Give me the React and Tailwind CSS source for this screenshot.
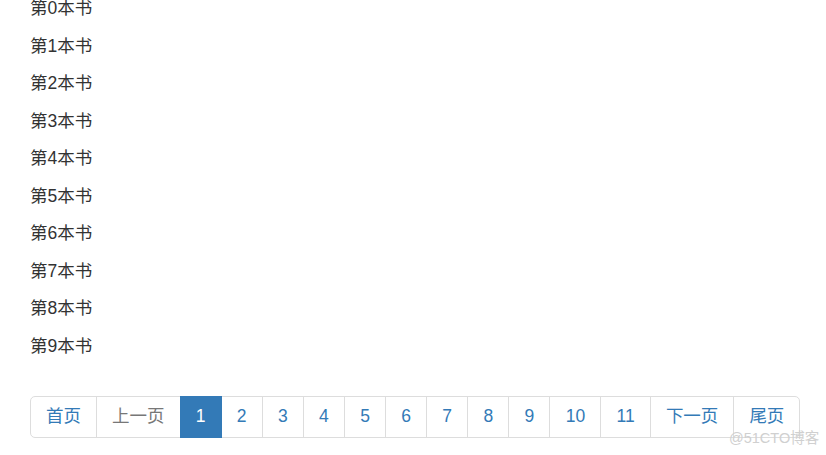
import React from "react";

const font = { fontFamily: '"Liberation Sans", Arial, "Noto Sans CJK SC", sans-serif' };

export default function App() {
  const books = Array.from({ length: 10 }, (_, i) => `第${i}本书`);
  const pages = ["1", "2", "3", "4", "5", "6", "7", "8", "9", "10", "11"];
  return (
    <div className="relative w-[826px] h-[455px] overflow-hidden bg-white text-[#333]" style={font}>
      <div className="pl-[30px] -mt-[4px]">
        {books.map((b) => (
          <div key={b} className="text-[17.5px] leading-[25px] mb-[12.5px]">
            {b}
          </div>
        ))}
        <ul className="flex mt-[37px] text-[17.5px] leading-[25px]">
          <li>
            <a className="block px-[15px] py-[7.5px] border border-[#ddd] rounded-l-[5px] text-[#337ab7]">首页</a>
          </li>
          <li>
            <a className="block -ml-px px-[15px] py-[7.5px] border border-[#ddd] text-[#777]">上一页</a>
          </li>
          {pages.map((p) =>
            p === "1" ? (
              <li key={p} className="relative z-10">
                <a className="block -ml-px px-[15.2px] py-[7.5px] border border-[#337ab7] bg-[#337ab7] text-white">{p}</a>
              </li>
            ) : (
              <li key={p}>
                <a className="block -ml-px px-[15.2px] py-[7.5px] border border-[#ddd] text-[#337ab7]">{p}</a>
              </li>
            )
          )}
          <li>
            <a className="block -ml-px px-[15px] py-[7.5px] border border-[#ddd] text-[#337ab7]">下一页</a>
          </li>
          <li>
            <a className="block -ml-px px-[15px] py-[7.5px] border border-[#ddd] rounded-r-[5px] text-[#337ab7]">尾页</a>
          </li>
        </ul>
      </div>
      <div className="absolute left-[729px] top-[428px] text-[14.5px] leading-[20px] text-[#d0d0d0] whitespace-nowrap">
        @51CTO博客
      </div>
    </div>
  );
}
